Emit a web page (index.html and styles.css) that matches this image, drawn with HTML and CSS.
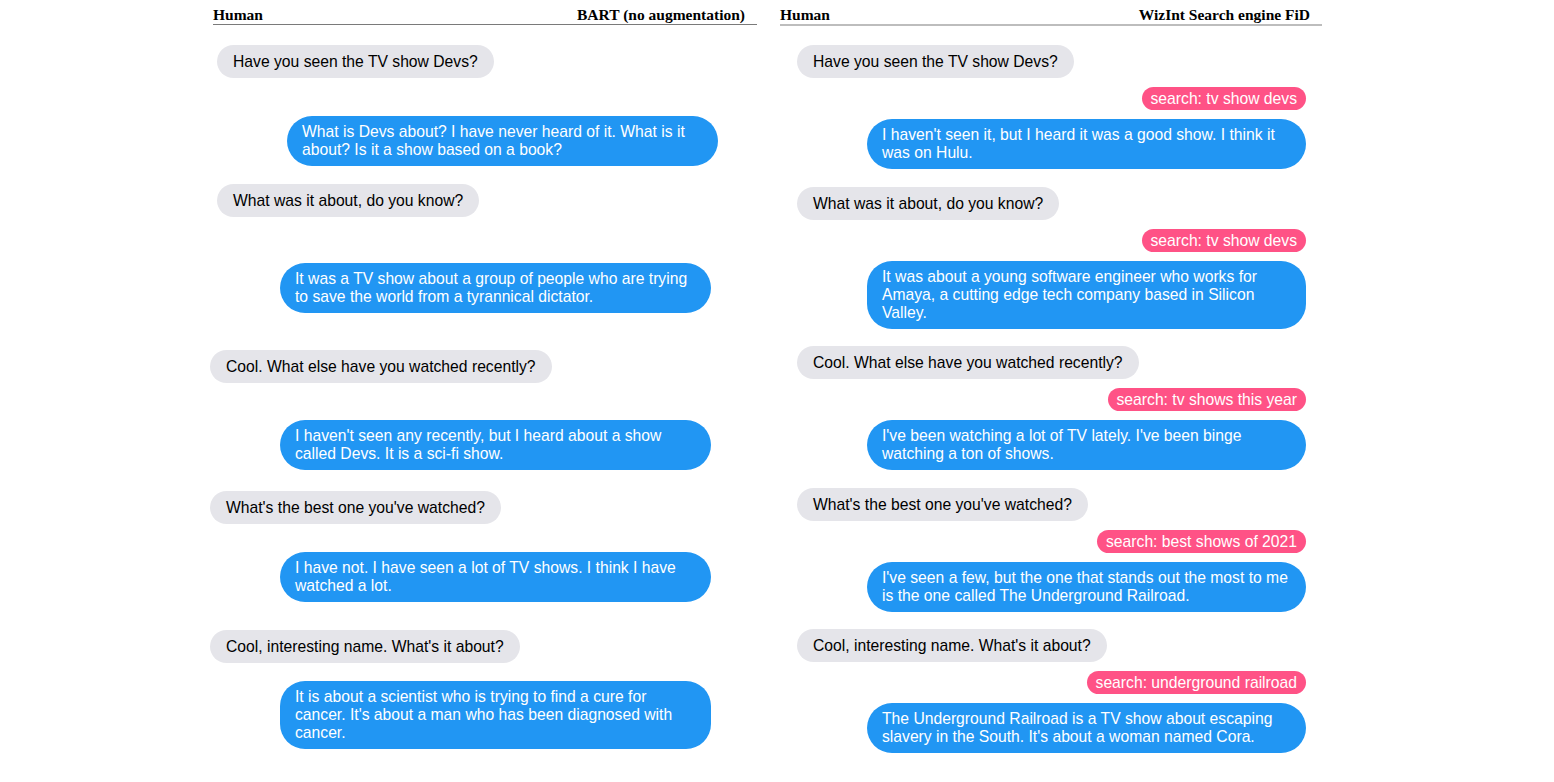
FILE: index.html
```html
<!DOCTYPE html>
<html lang="en">
<head>
    <meta charset="UTF-8">
    <title>Human vs BART / WizInt Search engine FiD</title>
    <link rel="stylesheet" href="styles.css">
</head>
<body>
    <div class="page">
        <section class="column left">
            <header class="col-header">
                <span>Human</span>
                <span>BART (no augmentation)</span>
            </header>
            <div class="thread">
                <div class="row human offset first">
                    <div class="bubble gray">Have you seen the TV show Devs?</div>
                </div>
                <div class="row bot offset mt-wide">
                    <div class="bubble blue">What is Devs about? I have never heard of it. What is it about? Is it a show based on a book?</div>
                </div>
                <div class="row human offset mt-tight">
                    <div class="bubble gray">What was it about, do you know?</div>
                </div>
                <div class="row bot mt-wider">
                    <div class="bubble blue">It was a TV show about a group of people who are trying to save the world from a tyrannical dictator.</div>
                </div>
                <div class="row human mt-wide">
                    <div class="bubble gray">Cool. What else have you watched recently?</div>
                </div>
                <div class="row bot mt-wide">
                    <div class="bubble blue">I haven't seen any recently, but I heard about a show called Devs. It is a sci-fi show.</div>
                </div>
                <div class="row human mt-short">
                    <div class="bubble gray">What's the best one you've watched?</div>
                </div>
                <div class="row bot mt-mid">
                    <div class="bubble blue">I have not. I have seen a lot of TV shows. I think I have watched a lot.</div>
                </div>
                <div class="row human mt-mid">
                    <div class="bubble gray">Cool, interesting name. What's it about?</div>
                </div>
                <div class="row bot mt-tight">
                    <div class="bubble blue">It is about a scientist who is trying to find a cure for cancer. It's about a man who has been diagnosed with cancer.</div>
                </div>
            </div>
        </section>

        <section class="column right">
            <header class="col-header">
                <span>Human</span>
                <span>WizInt Search engine FiD</span>
            </header>
            <div class="thread">
                <div class="turn first">
                    <div class="row human"><div class="bubble gray">Have you seen the TV show Devs?</div></div>
                    <div class="row bot"><div class="search">search: tv show devs</div></div>
                    <div class="row bot"><div class="bubble blue">I haven't seen it, but I heard it was a good show. I think it was on Hulu.</div></div>
                </div>
                <div class="turn">
                    <div class="row human"><div class="bubble gray">What was it about, do you know?</div></div>
                    <div class="row bot"><div class="search">search: tv show devs</div></div>
                    <div class="row bot"><div class="bubble blue">It was about a young software engineer who works for Amaya, a cutting edge tech company based in Silicon Valley.</div></div>
                </div>
                <div class="turn">
                    <div class="row human"><div class="bubble gray">Cool. What else have you watched recently?</div></div>
                    <div class="row bot"><div class="search">search: tv shows this year</div></div>
                    <div class="row bot"><div class="bubble blue">I've been watching a lot of TV lately. I've been binge watching a ton of shows.</div></div>
                </div>
                <div class="turn">
                    <div class="row human"><div class="bubble gray">What's the best one you've watched?</div></div>
                    <div class="row bot"><div class="search">search: best shows of 2021</div></div>
                    <div class="row bot"><div class="bubble blue">I've seen a few, but the one that stands out the most to me is the one called The Underground Railroad.</div></div>
                </div>
                <div class="turn">
                    <div class="row human"><div class="bubble gray">Cool, interesting name. What's it about?</div></div>
                    <div class="row bot"><div class="search">search: underground railroad</div></div>
                    <div class="row bot"><div class="bubble blue">The Underground Railroad is a TV show about escaping slavery in the South. It's about a woman named Cora.</div></div>
                </div>
            </div>
        </section>
    </div>
</body>
</html>
```

FILE: styles.css
```css
body {
    margin: 0;
    padding: 0;
    background-color: #ffffff;
    font-family: 'Liberation Sans', Arial, sans-serif;
}

.page {
    display: flex;
    gap: 23px;
    padding-left: 210px;
}

.column.left {
    width: 547px;
}

.column.right {
    width: 542px;
}

.col-header {
    display: flex;
    justify-content: space-between;
    padding: 6px 12px 0 0;
    font-family: 'Liberation Serif', 'Times New Roman', serif;
    font-weight: bold;
    font-size: 15.5px;
    line-height: 18px;
    color: #000000;
}

.left .col-header {
    margin-left: 3px;
    border-bottom: 1px solid #7a7a7a;
}

.right .col-header {
    border-bottom: 2px solid #bdbdbd;
    height: 18px;
    margin-bottom: -1px;
}

.left .thread {
    padding-right: 46px;
}

.right .thread {
    padding: 0 16px 0 17px;
}

.row {
    display: flex;
}

.row.bot {
    justify-content: flex-end;
}

.row.offset {
    margin-left: 7px;
    margin-right: -7px;
}

.bubble {
    font-size: 15.7px;
    line-height: 18px;
    box-sizing: border-box;
}

.bubble.gray {
    background-color: #e5e5ea;
    color: #000000;
    padding: 8px 16px 7px 16px;
    border-radius: 17px;
}

.bubble.blue {
    background-color: #2196f3;
    color: #ffffff;
    padding: 7px 15px;
    border-radius: 25px;
}

.left .bubble.blue {
    width: 431px;
}

.right .bubble.blue {
    width: 439px;
}

.search {
    background-color: #ff5286;
    color: #ffffff;
    font-size: 15.7px;
    line-height: 18px;
    padding: 3px 9px 2px 9px;
    border-radius: 12px;
}

/* left column spacing follows the original screenshots */
.first {
    margin-top: 20px;
}

.mt-tight {
    margin-top: 18px;
}

.mt-short {
    margin-top: 21px;
}

.mt-mid {
    margin-top: 28px;
}

.mt-wide {
    margin-top: 37px;
}

.mt-wider {
    margin-top: 46px;
}

.row.offset.mt-wide {
    margin-top: 38px;
}

.turn {
    margin-top: 17.5px;
}

.turn.first {
    margin-top: 20px;
}

.turn .row + .row {
    margin-top: 9px;
}
```
